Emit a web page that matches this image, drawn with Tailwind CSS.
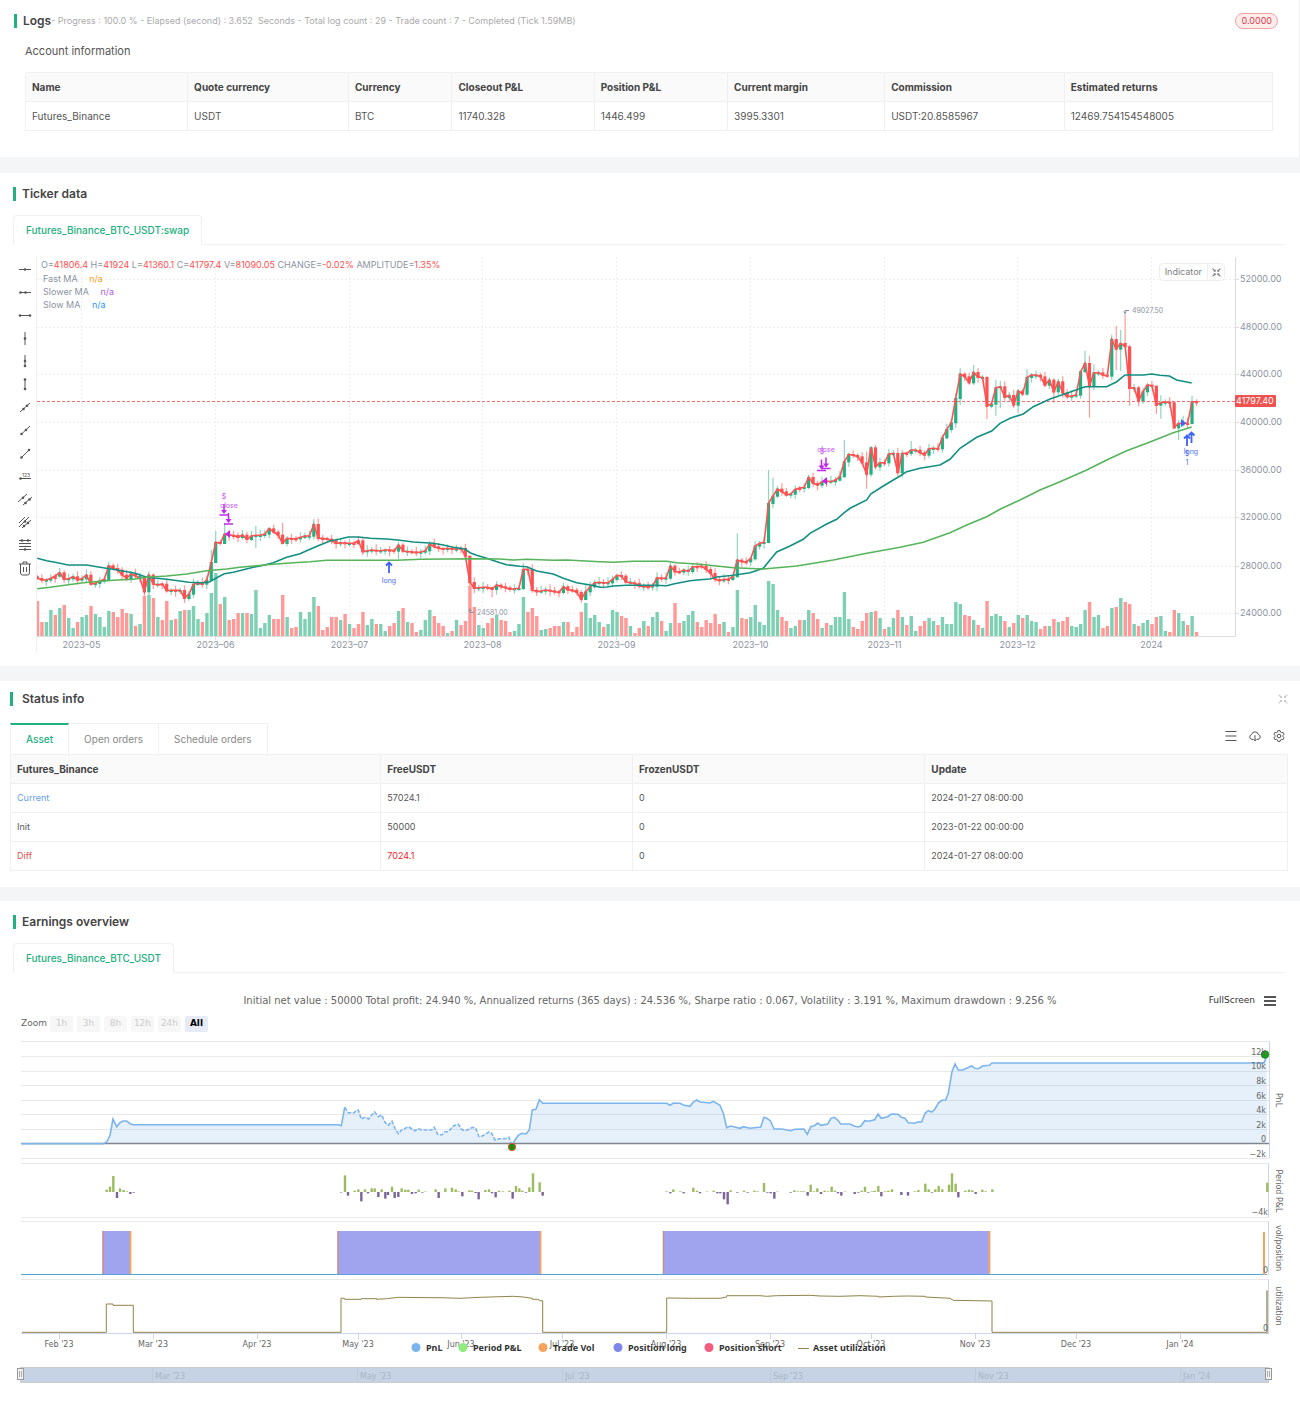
<!DOCTYPE html>
<html lang="en">

<head>
  <meta charset="UTF-8">
  <meta name="viewport" content="width=device-width, initial-scale=1.0">
  <title>Backtest result</title>
  <script src="https://cdn.jsdelivr.net/npm/@tailwindcss/browser@4"></script>
</head>

<body class="min-h-screen flex flex-col bg-[#f4f5f7] font-['Inter',sans-serif] text-[#555]">

  <!-- Logs -->
  <section class="bg-white pt-3 pb-[26px] border-r border-[#f0f0f0]">
    <div class="flex items-center h-[18px] pl-[14px] pr-[21px]">
      <span class="w-[3px] h-[14px] bg-[#22b07d]"></span>
      <h2 class="ml-[6px] text-[12px] font-semibold text-[#444]">Logs</h2>
      <p class="text-[9px] text-[#aaa] whitespace-pre">- Progress : 100.0 % - Elapsed (second) : 3.652  Seconds - Total log count : 29 - Trade count : 7 - Completed (Tick 1.59MB)</p>
      <span class="ml-auto h-4 px-[5px] flex items-center rounded-full border border-[#f5a3a0] bg-[#fdeeed] text-[9px] text-[#e03c4c]">0.0000</span>
    </div>
    <h3 class="flex items-center h-[42px] pl-[25px] text-[11px]">Account information</h3>
    <div class="pl-[25px] pr-[26px]">
      <table class="w-full table-fixed border-collapse text-left text-[10px] [&_th]:border [&_td]:border [&_th]:border-[#f0f0f0] [&_td]:border-[#f0f0f0] [&_th]:px-[6px] [&_td]:px-[6px] [&_tr]:h-[29px]">
        <colgroup>
          <col class="w-[13%]"><col class="w-[12.9%]"><col class="w-[8.3%]"><col class="w-[11.4%]">
          <col class="w-[10.7%]"><col class="w-[12.6%]"><col class="w-[14.4%]"><col>
        </colgroup>
        <thead class="bg-[#fafafa] text-[#444]">
          <tr>
            <th>Name</th>
            <th>Quote currency</th>
            <th>Currency</th>
            <th>Closeout P&amp;L</th>
            <th>Position P&amp;L</th>
            <th>Current margin</th>
            <th>Commission</th>
            <th>Estimated returns</th>
          </tr>
        </thead>
        <tbody>
          <tr>
            <td>Futures_Binance</td>
            <td>USDT</td>
            <td>BTC</td>
            <td>11740.328</td>
            <td>1446.499</td>
            <td>3995.3301</td>
            <td>USDT:20.8585967</td>
            <td>12469.754154548005</td>
          </tr>
        </tbody>
      </table>
    </div>
  </section>

  <!-- Ticker data -->
  <section class="bg-white mt-4 pt-3 pb-[9px]">
    <div class="flex items-center h-[18px] pl-[13px]">
      <span class="w-[3px] h-[14px] bg-[#22b07d]"></span>
      <h2 class="ml-[6px] text-[12px] font-semibold text-[#444]">Ticker data</h2>
    </div>
    <div class="mt-3 ml-[13px] mr-[15px] flex border-b border-[#f2f2f2]">
      <button class="h-[30px] -mb-px px-3 rounded-t-sm border border-[#f0f0f0] border-b-white bg-white text-[10px] font-medium text-[#22b07d]">Futures_Binance_BTC_USDT:swap</button>
    </div>
    <div class="relative flex">
      <div id="drawTools" class="w-9 shrink-0 pt-[13px] pl-[13px] flex flex-col text-[#555] [&_button]:h-[23px] [&_button]:w-[23px] [&_button]:flex [&_button]:items-center [&_button]:justify-center"></div>
      <svg id="tickerChart" class="flex-1 min-w-0 h-auto" viewBox="36 245 1264 412" font-family="Inter, sans-serif"></svg>
      <div class="absolute left-[41px] top-[13px] text-[9px] leading-[14px] text-[#8b93a1] [&_b]:font-normal [&_b]:text-[#ff4f4f]">
        <p>O=<b>41806.4</b> H=<b>41924</b> L=<b>41360.1</b> C=<b>41797.4</b> V=<b>81090.05</b> CHANGE=<b>-0.02%</b> AMPLITUDE=<b>1.35%</b></p>
        <p class="pl-[2px] leading-[13px]">Fast MA <span class="ml-[9px] text-[#ff9d1e]">n/a</span></p>
        <p class="pl-[2px] leading-[13px]">Slower MA <span class="ml-[9px] text-[#b060d8]">n/a</span></p>
        <p class="pl-[2px] leading-[13px]">Slow MA <span class="ml-[9px] text-[#2a96f0]">n/a</span></p>
      </div>
      <div class="absolute right-[75px] top-[18px] h-[18px] flex items-stretch rounded-sm border border-[#eee] bg-white text-[9px] text-[#808080]">
        <button class="px-[5px]">Indicator</button>
        <button class="w-[17px] flex items-center justify-center border-l border-[#eee]" aria-label="Expand chart">
          <svg class="size-[9px]" viewBox="0 0 10 10" fill="none" stroke="#777" stroke-width="1.2"><path d="M.6.6 3 3M2 3.500h1.500V2M9.400.6 7 3M6.500 2v1.500H8M.6 9.400 3 7M2 6.500h1.500V8M9.400 9.400 7 7M6.500 8V6.500H8"/></svg>
        </button>
      </div>
    </div>
  </section>

  <!-- Status info -->
  <section class="bg-white mt-[15px] pt-[9px] pb-4">
    <div class="flex items-center h-[18px] pl-[10px] pr-[12px]">
      <span class="w-[3px] h-[14px] bg-[#22b07d]"></span>
      <h2 class="ml-[9px] text-[12px] font-semibold text-[#444]">Status info</h2>
      <button class="ml-auto" aria-label="Expand status">
        <svg class="size-[10px]" viewBox="0 0 10 10" fill="none" stroke="#ccc" stroke-width="1.1"><path d="M.6.6 3 3M2 3.500h1.500V2M9.400.6 7 3M6.500 2v1.500H8M.6 9.400 3 7M2 6.500h1.500V8M9.400 9.400 7 7M6.500 8V6.500H8"/></svg>
      </button>
    </div>
    <div class="mt-[15px] ml-[10px] mr-[12px]">
      <div class="flex items-center h-[31px] text-[10px] text-[#888] [&>button]:h-full">
        <button class="px-[15px] border-t-2 border-t-[#22b07d] border-x border-x-[#f0f0f0] font-medium text-[#22b07d]">Asset</button>
        <button class="px-[15px] border-t border-r border-[#f0f0f0]">Open orders</button>
        <button class="px-[15px] border-t border-r border-[#f0f0f0]">Schedule orders</button>
        <div class="ml-auto mr-[3px] mb-[5px] flex gap-3 text-[#555] [&_svg]:size-3">
          <button aria-label="List"><svg viewBox="0 0 12 12" stroke="currentColor" stroke-width="1.2"><path d="M.5 1.500h11M.5 6h11M.5 10.500h11"/></svg></button>
          <button aria-label="Download"><svg viewBox="0 0 12 12" fill="none" stroke="currentColor" stroke-linecap="round" stroke-linejoin="round"><path d="M3.600 9.400H3A2.500 2.500 0 0 1 2.600 4.500a3.500 3.500 0 0 1 6.800 0A2.500 2.500 0 0 1 9 9.400h-.6M6 5.600v5M4.700 9.500 6 10.800l1.300-1.300"/></svg></button>
          <button aria-label="Settings"><svg viewBox="0 0 12 12" fill="none" stroke="currentColor" stroke-linejoin="round"><circle cx="6" cy="6" r="1.8"/><path d="M4.900.6h2.200l.4 1.500 1 .6 1.500-.4 1.100 1.900L10 5.300v1.400l1.100 1.100L10 9.700l-1.500-.4-1 .6-.4 1.500H4.900l-.4-1.500-1-.6-1.500.4L.9 7.800 2 6.700V5.300L.9 4.200 2 2.300l1.500.4 1-.6z"/></svg></button>
        </div>
      </div>
      <table class="w-full table-fixed border-collapse text-left text-[9px] [&_th]:border [&_td]:border [&_th]:border-[#f0f0f0] [&_td]:border-[#f0f0f0] [&_th]:px-[6px] [&_td]:px-[6px] [&_tr]:h-[29px]">
        <colgroup>
          <col class="w-[29%]"><col class="w-[19.7%]"><col class="w-[22.9%]"><col>
        </colgroup>
        <thead class="bg-[#fafafa] text-[10px] text-[#444]">
          <tr>
            <th>Futures_Binance</th>
            <th>FreeUSDT</th>
            <th>FrozenUSDT</th>
            <th>Update</th>
          </tr>
        </thead>
        <tbody>
          <tr>
            <td class="text-[#5f9fec]">Current</td>
            <td>57024.1</td>
            <td>0</td>
            <td>2024-01-27 08:00:00</td>
          </tr>
          <tr>
            <td>Init</td>
            <td>50000</td>
            <td>0</td>
            <td>2023-01-22 00:00:00</td>
          </tr>
          <tr>
            <td class="text-[#e0524c]">Diff</td>
            <td class="text-[#f5222d]">7024.1</td>
            <td>0</td>
            <td>2024-01-27 08:00:00</td>
          </tr>
        </tbody>
      </table>
    </div>
  </section>

  <!-- Earnings overview -->
  <section class="bg-white mt-[14px] pt-3 pb-3 flex-1">
    <div class="flex items-center h-[18px] pl-[13px]">
      <span class="w-[3px] h-[14px] bg-[#22b07d]"></span>
      <h2 class="ml-[6px] text-[12px] font-semibold text-[#444]">Earnings overview</h2>
    </div>
    <div class="mt-3 ml-[13px] mr-[15px] flex border-b border-[#f2f2f2]">
      <button class="h-[30px] -mb-px px-3 rounded-t-sm border border-[#f0f0f0] border-b-white bg-white text-[10px] font-medium text-[#22b07d]">Futures_Binance_BTC_USDT</button>
    </div>
    <div class="font-['DejaVu_Sans',sans-serif]">
      <div class="relative mt-3 h-[31px] flex items-center justify-center">
        <p class="text-[10px] text-[#666]">Initial net value : 50000 Total profit: 24.940 %, Annualized returns (365 days) : 24.536 %, Sharpe ratio : 0.067, Volatility : 3.191 %, Maximum drawdown : 9.256 %</p>
        <div class="absolute right-[24px] top-0 h-full flex items-center gap-[9px] text-[9px] text-[#333]">
          <button>FullScreen</button>
          <button aria-label="Chart menu"><svg class="w-3 h-[10px]" viewBox="0 0 12 10" stroke="#555" stroke-width="2"><path d="M0 1h12M0 5h12M0 9h12"/></svg></button>
        </div>
      </div>
      <div class="flex items-center h-4 pl-[21px] text-[9px] text-[#666]">
        <span class="mr-[3px]">Zoom</span>
        <div class="flex gap-1 [&_button]:w-[23px] [&_button]:h-4 [&_button]:rounded-xs">
          <button class="bg-[#f7f7f7] text-[#ccc]" disabled>1h</button>
          <button class="bg-[#f7f7f7] text-[#ccc]" disabled>3h</button>
          <button class="bg-[#f7f7f7] text-[#ccc]" disabled>8h</button>
          <button class="bg-[#f7f7f7] text-[#ccc]" disabled>12h</button>
          <button class="bg-[#f7f7f7] text-[#ccc]" disabled>24h</button>
          <button class="bg-[#e6ebf5] text-black font-bold">All</button>
        </div>
      </div>
    </div>
    <svg id="pnlChart" class="block w-full h-auto" viewBox="0 1032 1300 360" font-family="DejaVu Sans, sans-serif"></svg>
  </section>

  <script>
    // drawing tools of the ticker chart
    const L = (d) => `<path d="${d}" fill="none" stroke="currentColor" stroke-width="1"/>`
    const D = (...p) => p.map(([x, y]) => `<circle cx="${x}" cy="${y}" r="1.3" fill="currentColor"/>`).join('')
    const tools = [
      ['Horizontal line', L('M1 7.500h12') + D([7, 7.5])],
      ['Horizontal ray', L('M2 7.500h11') + D([2.5, 7.5], [7.5, 7.5])],
      ['Horizontal segment', L('M2 7.500h10') + D([2, 7.5], [12, 7.5])],
      ['Vertical line', L('M7 1v13') + D([7, 7.5])],
      ['Vertical ray', L('M7 1v11') + D([7, 7], [7, 12])],
      ['Vertical segment', L('M7 2v10') + D([7, 2.5], [7, 12])],
      ['Straight line', L('M2 12 12 3') + D([5.5, 9], [9, 5.8])],
      ['Ray', L('M3 11.500 12 3') + D([3.5, 11], [8, 7])],
      ['Segment', L('M3 12 11 4') + D([3.5, 11.5], [11, 4])],
      ['Price line', L('M2 9.500h11') + D([2.5, 9.5]) + '<text x="4" y="8" font-size="5" fill="currentColor">123</text>'],
      ['Parallel lines', L('M0 10 9 2M5 13 14 5') + D([5, 5.8], [7.5, 11], [11.5, 7.5])],
      ['Price channel', L('M1 8 7 2M1 12 11 2M4 13 13 5') + D([7, 6.5], [6, 11], [10, 8])],
      ['Fibonacci', L('M1 2.500h12M1 5.500h12M1 8.500h12M1 11.500h12') + D([4, 2.5], [10, 2.5], [7, 11.5])],
      ['Remove', L('M1 3h12M5 3V1h4v2M2.500 3v9q0 2 2 2h5q2 0 2-2V3M5.500 6v5M8.500 6v5')],
    ]
    document.getElementById('drawTools').innerHTML = tools.map(([name, icon]) =>
      `<button aria-label="${name}"><svg width="14" height="15" viewBox="0 0 14 15">${icon}</svg></button>`).join('')

    // series are stored in thirds of a pixel, counted from the chart's origin
    const pts = (list, oy) => list.map(([x, y]) => [x / 3, oy + y / 3])
    const poly = (p) => 'M' + p.map(([x, y]) => x.toFixed(1) + ' ' + y.toFixed(1)).join('L')
    const pairs = (s) => s.trim().split(/\s+/).map((p) => p.split(',').map(Number))
    const nums = (s) => s.trim().split(/\s+/).map(Number)

    // ---- ticker chart ----
    const close = nums(`
      985 990 990 985 978 968 988 986 980 990
      986 975 1002 1000 993 988 947 955 960 975
      985 972 978 985 1025 975 1002 1005 1002 1022
      1021 1021 1021 1045 1032 1003 1000 1002 990 937
      877 880 852 856 856 862 855 868 858 856
      856 852 836 846 855 880 865 866 866 862
      858 858 823 865 865 867 872 880 878 880
      880 880 872 905 902 900 902 902 900 900
      903 885 903 905 905 908 906 902 883 890
      895 897 895 897 897 895 918 997 1015 1013
      1012 1012 1018 1005 1010 1013 1018 1016 1015 958
      958 1020 1025 1023 1020 1022 1025 1027 1010 1020
      1020 1027 1048 1025 1010 998 997 998 998 988
      976 978 996 998 1000 1008 1010 1010 1008 983
      986 984 948 965 966 960 964 950 950 948
      958 970 988 992 988 988 980 930 935 935
      926 888 880 877 760 738 717 725 735 732
      718 714 712 682 700 705 695 693 695 690
      680 635 613 616 620 638 672 593 650 638
      638 612 610 668 610 610 600 600 608 615
      596 595 596 563 538 518 445 372 380 398
      367 382 382 468 462 413 410 442 436 465
      423 432 382 375 375 380 405 390 425 395
      428 440 438 435 365 340 408 368 368 375
      378 268 297 280 290 415 413 453 425 405
      408 465 458 456 458 533 520 520 520 455
      455`)
    // negative = red bar
    const volume = nums(`
      -35 -14 14 26 -21 28 -31 18 8 -14
      19 21 -30 22 19 9 25 -24 -19 -27
      -23 22 -10 12 -40 41 -38 19 -16 -35
      16 -17 25 -26 26 30 17 -14 23 43
      63 -32 39 -16 -17 -23 23 -23 22 46
      8 13 21 -17 -17 -41 19 -8 -9 24
      17 24 39 -30 -6 -9 -19 -19 16 -22
      12 -8 -12 -24 11 17 -12 12 5 -10
      -13 25 -28 14 -13 -4 6 16 26 -20
      -13 -10 3 -5 16 -11 -15 -50 -29 11
      8 -13 -18 21 -16 -15 -4 5 12 39
      -24 -28 -20 6 7 -8 -10 -10 14 -14
      -4 -9 -24 33 18 21 14 -9 12 26
      24 -20 -18 10 -3 -8 15 -10 19 24
      -15 5 13 -33 -13 15 21 25 -14 -9
      -16 -13 -22 -12 14 -4 9 46 -18 -17
      19 31 14 11 55 52 26 -19 -15 8
      10 -16 16 26 -23 -17 8 -13 11 19
      19 44 17 -9 -7 -15 -23 24 -25 18
      -7 9 18 -26 19 -11 20 5 -10 -15
      18 15 -11 19 12 12 34 32 -21 -20
      16 -11 8 -35 20 22 20 -15 9 -13
      21 -18 21 15 14 -7 -10 10 -17 14
      -15 -19 10 9 12 26 -34 19 21 -8
      -10 28 -29 38 -34 -32 12 -10 13 16
      -12 -19 20 5 -4 -26 23 15 -11 20
      -4`)
    // [high, low] of the candles with a long shadow
    const shadow = {
      16: [935, 990], 24: [980, 1040], 39: [900, 985], 40: [843, 940], 42: [820, 880], 49: [828, 893], 55: [818, 880], 62: [808, 868],
      81: [875, 928], 97: [918, 1080], 102: [1010, 1042], 109: [940, 1020], 122: [1020, 1058], 123: [1000, 1050],
      157: [850, 980], 164: [660, 880], 165: [683, 775], 181: [570, 682], 186: [605, 716], 187: [588, 680], 196: [573, 618],
      207: [355, 465], 210: [345, 405], 213: [378, 508], 215: [390, 497], 216: [392, 475], 220: [417, 490], 222: [358, 437],
      228: [385, 458], 235: [302, 366], 236: [317, 503], 237: [343, 420], 241: [254, 390], 242: [227, 360], 243: [240, 363],
      244: [195, 292], 245: [284, 467], 251: [412, 492], 252: [436, 506], 255: [455, 537], 256: [510, 570], 257: [497, 530],
      259: [437, 523], 260: [448, 468],
    }
    const slowMa = pts(pairs(`112,925 140,932 165,937 205,945 260,945 300,952 352,960 406,970 440,982 500,988 540,993 566,997
      606,998 628,996 650,983 673,971 700,967 760,952 790,946 820,938 860,922 900,911 930,898 960,885 990,873 1020,867
      1045,861 1075,861 1110,865 1160,867 1200,871 1240,876 1300,880 1330,885 1360,892 1395,897 1410,908 1430,916 1460,925
      1500,938 1520,944 1560,949 1580,950 1610,963 1660,972 1690,985 1730,998 1770,1005 1800,1012 1820,1011 1840,1008
      1880,1006 1960,1006 2000,1007 2020,1002 2070,992 2100,989 2130,987 2150,981 2200,976 2250,968 2290,955 2310,930
      2330,906 2370,888 2410,868 2430,850 2480,822 2510,808 2530,790 2550,775 2600,750 2612,732 2650,708 2680,690 2700,678
      2720,665 2760,655 2820,645 2850,628 2880,595 2930,562 2975,543 3000,520 3030,505 3070,492 3100,470 3150,447 3200,430
      3255,410 3320,410 3350,395 3375,375 3430,375 3455,372 3480,376 3508,378 3530,390 3575,399`), 250)
    const slowerMa = pts(pairs(`112,1016 150,1012 250,998 300,994 352,990 400,988 440,982 500,978 560,972 620,962 680,957 720,952
      800,944 880,938 930,935 980,931 1190,931 1260,928 1430,926 1500,927 1540,930 1580,928 1660,931 1700,930 1800,935
      1840,937 1900,934 2000,934 2030,938 2100,943 2200,953 2290,957 2390,948 2450,938 2500,930 2600,910 2700,892 2770,877
      2850,848 2900,825 2960,800 3000,778 3060,750 3120,720 3180,695 3260,660 3320,630 3380,602 3440,580 3520,548 3575,531`), 250)

    const cx = (i) => 37.4 + i * 4.458
    let t = '<clipPath id="plot"><rect x="37" y="257" width="1198" height="380"/></clipPath>'
    ;[279, 327, 374, 422, 470, 517, 566, 613].forEach((y, i) => {
      t += `<path d="M37 ${y}.5H1235" stroke="#efefef" stroke-dasharray="2 2"/><path d="M1235 ${y}.5h4" stroke="#ddd"/>`
      t += `<text x="1240" y="${y + 3}" font-size="9" fill="#8b93a1">${52000 - i * 4000}.00</text>`
    })
    ;['2023–05', '2023–06', '2023–07', '2023–08', '2023–09', '2023–10', '2023–11', '2023–12', '2024'].forEach((m, i) => {
      const x = Math.floor(81.6 + i * 133.75)
      t += `<path d="M${x}.5 257V636" stroke="#efefef" stroke-dasharray="2 2"/><path d="M${x}.5 636v4" stroke="#ddd"/>`
      t += `<text x="${x + .5}" y="648" font-size="9" fill="#8b93a1" text-anchor="middle">${m}</text>`
    })
    t += '<path d="M36.500 257V653" stroke="#eee"/><path d="M37 636.500H1235.500V257" fill="none" stroke="#ddd"/>'
    t += '<g clip-path="url(#plot)">'
    close.forEach((c, i) => {
      const x = cx(i), up = volume[i] > 0
      const o = i ? close[i - 1] : c - 5
      let top = Math.min(o, c) - 1, bottom = Math.max(o, c) + 2
      if (bottom - top < 6) bottom = top + 6
      const [hi, lo] = shadow[i] || [top - 4 - (i * 7) % 13, bottom + 3 + (i * 5) % 12]
      const v = Math.abs(volume[i])
      t += `<rect x="${x - 1.6}" y="${636 - v}" width="3.4" height="${v}" fill="${up ? '#7dd0b3' : '#ff9896'}"/>`
      t += `<path d="M${x} ${250 + hi / 3}V${250 + lo / 3}" stroke="${up ? '#8ed6bd' : '#ff9b98'}" stroke-width="1.2"/>`
      t += `<rect x="${x - 1.6}" y="${250 + top / 3}" width="3.2" height="${(bottom - top) / 3}" fill="${up ? '#1fb184' : '#ff4f4f'}"/>`
    })
    t += `<path d="M37 401.500H1235" stroke="#f26d6d" stroke-dasharray="3 2"/>`
    t += `<path d="${poly(close.map((c, i) => [cx(i), 250 + c / 3]))}" fill="none" stroke="#ff5252" stroke-width="1.6"/>`
    t += `<path d="${poly(slowMa)}" fill="none" stroke="#128f82" stroke-width="1.6"/>`
    t += `<path d="${poly(slowerMa)}" fill="none" stroke="#56b45a" stroke-width="1.6"/></g>`
    t += '<rect x="1235" y="395" width="41" height="12" rx="1" fill="#f0524f"/><text x="1236" y="404" font-size="9" fill="#fff">41797.40</text>'
    // high and low marks
    t += '<path d="M1129 310.500h-4v4M1123.500 311.500l1.500 2 1.500-2" fill="none" stroke="#8b93a1"/><text x="1132" y="313" font-size="7" fill="#8b93a1">49027.50</text>'
    t += '<path d="M474 612.500h-4v-4M468.500 611l1.500-2 1.500 2" fill="none" stroke="#8b93a1"/><text x="477" y="615" font-size="7" fill="#8b93a1">24581.00</text>'
    // orders
    const down = (x, y) => `<path d="M${x} ${y - 11}v9M${x - 4.5} ${y}h9" stroke="#c026f0" stroke-width="1.5"/><path d="M${x - 3} ${y - 5}h6l-3 4z" fill="#c026f0"/>`
    const rise = (x, y) => `<path d="M${x} ${y}v11M${x - 3} ${y + 3.5}l3-3 3 3" fill="none" stroke="#3d62f5" stroke-width="1.8"/>`
    t += down(224, 515) + down(228.5, 524) + down(821.5, 470.5) + down(826, 468.5)
    t += '<path d="M230 530v8l-5-4zM827 477v8l-5-4z" fill="#c026f0"/><path d="M1181 419v8l5-4z" fill="#3d62f5"/>'
    t += rise(389, 562) + rise(1187, 435) + rise(1191.5, 432)
    t += `<g font-size="7" text-anchor="middle"><g fill="#c553ec"><text x="224" y="499">$</text><text x="229" y="508">close</text><text x="822" y="454">$</text><text x="826" y="452">close</text></g>
      <g fill="#4c6ef5"><text x="389" y="583">long</text><text x="1191" y="454">long</text><text x="1187" y="456">$</text><text x="1187" y="465">1</text></g></g>`
    document.getElementById('tickerChart').innerHTML = t

    // ---- earnings chart ----
    const before = pairs(`63,491 310,491 320,486 330,466 339,417 350,440 360,428 370,423 380,423 390,431 400,434 1015,434 1024,437 1034,382`)
    const drawdown = pairs(`1034,382 1045,398 1062,398 1070,390 1075,390 1084,417 1095,412 1106,417 1115,405 1124,396 1135,410 1145,405
      1155,427 1165,436 1176,424 1185,445 1195,461 1205,450 1225,440 1245,452 1255,446 1265,450 1295,450 1303,442 1313,463
      1325,465 1335,455 1345,455 1360,438 1375,433 1387,450 1400,451 1418,442 1427,445 1437,470 1447,468 1467,456 1475,460
      1485,480 1500,476 1515,476 1527,472 1536,497`)
    const after = pairs(`1536,497 1545,480 1555,466 1565,460 1578,462 1588,450 1597,390 1608,388 1618,359 1628,370 2000,370 2010,376
      2020,369 2040,370 2050,375 2070,379 2080,366 2090,360 2100,366 2130,369 2140,364 2160,376 2170,400 2180,443 2192,438
      2220,445 2230,440 2250,445 2282,441 2292,412 2300,415 2311,422 2322,447 2345,447 2372,452 2385,448 2412,447 2422,463
      2432,440 2443,437 2453,429 2463,436 2483,432 2493,415 2503,412 2513,420 2522,432 2550,432 2562,438 2573,441 2583,438
      2594,422 2605,424 2624,419 2634,402 2644,415 2663,410 2674,402 2694,403 2704,412 2715,415 2725,428 2745,430 2755,425
      2765,426 2775,400 2785,392 2795,396 2805,387 2815,369 2825,361 2837,360 2845,340 2856,275 2865,252 2875,270 2888,270
      2915,258 2925,265 2935,266 2948,258 2968,256 2976,249 3792,249 3800,228`)
    const period = pairs(`320,7 330,16 340,48 351,-18 360,11 371,6 381,2 391,-6 401,-2 1023,-1 1035,50 1044,-11 1064,4 1075,8 1084,-28
      1095,8 1104,-4 1115,11 1124,11 1135,-15 1145,8 1156,-20 1164,-9 1176,16 1184,-18 1195,-15 1205,11 1216,7 1225,7 1236,-6
      1247,-4 1256,7 1267,-2 1276,1 1307,8 1316,-18 1336,11 1356,13 1367,8 1376,2 1387,-13 1408,5 1416,4 1427,-3 1436,-22
      1456,6 1467,8 1476,-4 1487,-16 1497,4 1508,2 1528,4 1538,-20 1548,18 1558,11 1567,4 1578,-2 1588,14 1599,56 1619,29
      1628,-11 2000,2 2011,-4 2020,8 2041,2 2051,-4 2080,13 2091,4 2100,-4 2121,1 2141,4 2152,-4 2161,-4 2172,-22 2183,-37
      2192,5 2212,-2 2232,4 2243,-2 2263,4 2272,2 2292,27 2302,-2 2312,-4 2323,-20 2332,1 2372,-2 2383,5 2393,2 2404,2 2412,2
      2423,-11 2432,22 2442,2 2452,11 2463,-6 2474,4 2484,2 2495,16 2505,4 2514,-4 2524,-11 2535,1 2564,-6 2575,-2 2585,4
      2595,16 2605,-2 2616,2 2624,4 2635,18 2644,-13 2655,2 2665,4 2676,8 2704,-9 2724,-11 2744,2 2755,6 2776,25 2786,8
      2796,-2 2806,8 2816,18 2827,8 2847,22 2856,56 2867,25 2875,-16 2896,4 2907,7 2917,5 2927,-6 2947,7 2957,2 2977,8 3802,28`)
    const utilization = pairs(`66,1057 319,1057 319,972 339,972 339,976 400,976 400,1057 1023,1057 1023,955 1034,955 1034,958 1084,958
      1084,956 1130,956 1130,958 1160,956 1195,952 1290,953 1320,953 1380,955 1440,952 1500,950 1540,949 1570,951 1597,955
      1597,958 1616,958 1618,962 1628,962 1628,1057 2000,1057 2000,954 2080,955 2160,955 2180,951 2180,947 2280,947 2300,949
      2330,947 2430,946 2460,948 2520,949 2580,947 2636,949 2636,951 2680,949 2720,948 2776,949 2776,951 2850,955 2860,961
      2976,963 2976,1057 3800,1057 3800,932`)

    let s = ''
    ;[1041, 1056, 1071, 1085, 1100, 1114, 1129, 1158, 1163, 1217, 1221, 1279].forEach((y) => {
      s += `<path d="M21 ${y}.5H1269" stroke="#e9e9e9"/>`
    })
    s += '<path d="M1269.500 1041V1158M1268.500 1163V1217M1268.500 1221V1275M1268.500 1279V1333M21 1333.500H1269" stroke="#ccd6eb" fill="none"/>'
    const area = poly(pts([...before, ...drawdown, ...after], 980))
    s += `<path d="${area}L1267 1143H21z" fill="#7cb5ec" fill-opacity=".2"/>`
    s += '<path d="M21 1143.500H1269" stroke="#7f8690" stroke-width="1.5"/>'
    s += `<g fill="none" stroke="#7cb5ec" stroke-width="1.6"><path d="${poly(pts(before, 980))}"/><path d="${poly(pts(drawdown, 980))}" stroke-dasharray="4 1.5"/><path d="${poly(pts(after, 980))}"/></g>`
    period.forEach(([x, h]) => {
      const v = Math.max(Math.abs(h) / 3, 0.5)
      s += `<rect x="${x / 3 - 1.2}" y="${h > 0 ? 1192 - v : 1192}" width="2.4" height="${v}" fill="${h > 0 ? '#9dbb61' : '#7c649b'}"/>`
    })
    s += '<path d="M21 1274.500H1267" stroke="#4fa9d3" stroke-width="1.2"/>'
    ;[[103, 27], [338, 202], [663.5, 325.5]].forEach(([x, w]) => {
      s += `<rect x="${x}" y="1231" width="${w}" height="43.5" fill="#8085e9" fill-opacity=".75"/>`
      s += `<path d="M${x} 1231v43" stroke="#c58f86" stroke-width="1.6"/><path d="M${x + w + .5} 1231v43" stroke="#f7a35c" stroke-width="1.8"/>`
    })
    s += '<path d="M1264 1232v43" stroke="#f7a35c" stroke-width="2"/>'
    s += `<path d="${poly(pts(utilization, 980))}" fill="none" stroke="#91834a" stroke-width="1"/>`
    s += '<path d="M1267 1290.500v43" stroke="#b5ad92" stroke-width="2"/>'
    // max drawdown and last point
    s += '<circle cx="512" cy="1147" r="3.7" fill="#0ba30b" stroke="#f0503c"/><path d="M512 1144v5" stroke="#7a3a10"/><circle cx="1265" cy="1054.5" r="3.7" fill="#12a512" stroke="#2c7a2c"/>'
    s += '<g font-size="8" fill="#666">'
    ;[['12k', 1055], ['10k', 1069], ['8k', 1084], ['6k', 1099], ['4k', 1113], ['2k', 1128], ['0', 1142], ['−2k', 1157]].forEach(([l, y]) => {
      s += `<text x="1266" y="${y}" text-anchor="end">${l}</text>`
    })
    s += '<text x="1268" y="1215" text-anchor="end">−4k</text><text x="1268" y="1273" text-anchor="end">0</text><text x="1268" y="1331" text-anchor="end">0</text>'
    ;[['PnL', 1100], ['Period P&amp;L', 1191], ['vol/position', 1248], ['utilization', 1306]].forEach(([l, y]) => {
      s += `<text transform="translate(1276 ${y}) rotate(90)" text-anchor="middle">${l}</text>`
    })
    ;[["Feb '23", 59], ["Mar '23", 153], ["Apr '23", 257], ["May '23", 358], ["Jun '23", 461], ["Jul '23", 562], ["Aug '23", 666], ["Sep '23", 770], ["Oct '23", 871], ["Nov '23", 975], ["Dec '23", 1076], ["Jan '24", 1180]].forEach(([l, x]) => {
      s += `<path d="M${x}.5 1333v6" stroke="#ccd6eb"/><text x="${x}" y="1347" text-anchor="middle">${l}</text>`
    })
    s += '</g><g font-family="Noto Sans, sans-serif" font-size="9" font-weight="bold" fill="#333">'
    ;[['PnL', 416, '#7cb5ec'], ['Period P&amp;L', 463, '#90ed7d'], ['Trade Vol', 543, '#f7a35c'], ['Position long', 618, '#8085e9'], ['Position short', 709, '#f15c80']].forEach(([l, x, c]) => {
      s += `<circle cx="${x}" cy="1347.5" r="4.5" fill="${c}"/><text x="${x + 10}" y="1351">${l}</text>`
    })
    s += '<path d="M798 1348.500h11" stroke="#91834a"/><text x="813" y="1351">Asset utilization</text></g>'
    // navigator
    s += '<rect x="20" y="1367" width="1249" height="15" fill="#c6d3e4"/><path d="M20 1367.500H1269M20 1382.500H1269" stroke="#ccc"/>'
    ;[["Mar '23", 152], ["May '23", 357], ["Jul '23", 562], ["Sep '23", 770], ["Nov '23", 975], ["Jan '24", 1180]].forEach(([l, x]) => {
      s += `<path d="M${x}.5 1368v14" stroke="#bccadb"/><text x="${x + 3}" y="1379" font-size="8" fill="#a9b5c4">${l}</text>`
    })
    ;[20, 1268].forEach((x) => {
      s += `<rect x="${x - 2.5}" y="1368.5" width="6" height="11" fill="#f2f2f2" stroke="#999"/><path d="M${x - .5} 1371v6M${x + 1.5} 1371v6" stroke="#999" stroke-width=".8"/>`
    })
    document.getElementById('pnlChart').innerHTML = s
  </script>
</body>

</html>
